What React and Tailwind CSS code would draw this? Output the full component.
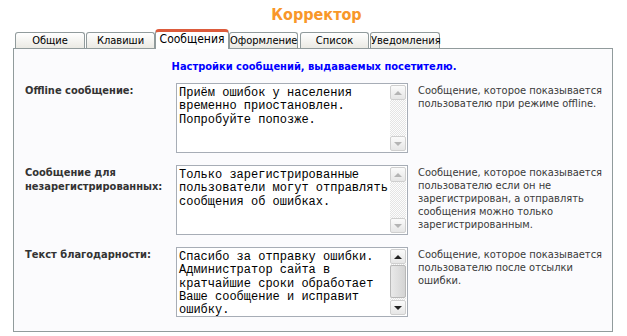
import React from 'react';

const tahoma = "font-['DejaVu_Sans_Condensed','Liberation_Sans',sans-serif]";

const tabs = [
  { label: 'Общие', w: 'w-[70px]', ml: 'ml-[15px]' },
  { label: 'Клавиши', w: 'w-[69px]', ml: 'ml-[1px]' },
  { label: 'Сообщения', w: 'w-[74px]', ml: 'ml-0', active: true },
  { label: 'Оформление', w: 'w-[69px]', ml: 'ml-0' },
  { label: 'Список', w: 'w-[69px]', ml: 'ml-[2px]' },
  { label: 'Уведомления', w: 'w-[70px]', ml: 'ml-[1px]' },
];

const rows = [
  {
    label: ['Offline сообщение:'],
    text: ['Приём ошибок у населения', 'временно приостановлен.', 'Попробуйте попозже.'],
    desc: ['Сообщение, которое показывается', 'пользователю при режиме offline.'],
  },
  {
    label: ['Сообщение для', 'незарегистрированных:'],
    text: ['Только зарегистрированные', 'пользователи могут отправлять', 'сообщения об ошибках.'],
    desc: [
      'Сообщение, которое показывается',
      'пользователю если он не',
      'зарегистрирован, а отправлять',
      'сообщения можно только',
      'зарегистрированным.',
    ],
  },
  {
    label: ['Текст благодарности:'],
    text: [
      'Спасибо за отправку ошибки.',
      'Администратор сайта в',
      'кратчайшие сроки обработает',
      'Ваше сообщение и исправит',
      'ошибку.',
    ],
    desc: ['Сообщение, которое показывается', 'пользователю после отсылки', 'ошибки.'],
    scroll: true,
  },
];

function Arrow({ up, active }) {
  const color = active ? 'border-b-[#222] border-t-[#222]' : 'border-b-[#b4b4b4] border-t-[#b4b4b4]';
  return (
    <div
      className={`w-0 h-0 border-x-[4px] border-x-transparent ${color} ${up ? 'border-b-[4px] border-t-0' : 'border-t-[4px] border-b-0'}`}
    />
  );
}

function ScrollButton({ up, active }) {
  return (
    <div className="h-[15px] flex items-center justify-center border border-[#cfcfcf] rounded-[2px] bg-gradient-to-b from-[#fbfbfb] to-[#e6e6e6]">
      <Arrow up={up} active={active} />
    </div>
  );
}

function Scrollbar({ active }) {
  return (
    <div className="w-[16px] flex flex-col py-[1px] mr-[1px]">
      <ScrollButton up active={active} />
      <div className="flex-1 flex flex-col bg-[repeating-conic-gradient(#e4e4e4_0_25%,#fdfdfd_0_50%)] bg-size-[2px_2px]">
        {active && (
          <div className="h-[33px] mt-[1px] border border-[#b8b8b8] rounded-[2px] bg-gradient-to-r from-[#e9e9e9] to-[#d4d4d4]" />
        )}
      </div>
      <ScrollButton active={active} />
    </div>
  );
}

export default function App() {
  return (
    <div className={`w-[627px] h-[336px] bg-white overflow-hidden ${tahoma}`}>
      <div className="h-[29px] pt-[5px] text-center text-[16px] leading-[19px] font-bold text-[#f8972a] pl-[6px]">
        Корректор
      </div>
      <div className="flex items-end h-[19px]">
        {tabs.map((t) =>
          t.active ? (
            <div
              key={t.label}
              className={`${t.w} ${t.ml} h-[20px] -mb-[1px] relative z-10 bg-white border-x border-[#919b9c] border-t-[3px] border-t-[#dc5b3c] rounded-t-[4px] text-center text-[12px] leading-[15px] text-black`}
            >
              {t.label}
            </div>
          ) : (
            <div
              key={t.label}
              className={`${t.w} ${t.ml} h-[16px] border border-b-0 border-[#919b9c] rounded-t-[3px] bg-gradient-to-b from-white to-[#ebeae4] text-center text-[11px] leading-[15px] text-black`}
            >
              {t.label}
            </div>
          )
        )}
      </div>
      <div className="ml-[13px] w-[600px] h-[284px] border border-[#919b9c] bg-[#fbfbfd] pt-[11px] px-[11px]">
        <div className="text-center text-[11px] leading-[13px] font-bold text-[#0000ff] mb-[10px] pl-[2px]">
          Настройки сообщений, выдаваемых посетителю.
        </div>
        <div className="flex flex-col gap-[12px]">
          {rows.map((r, i) => (
            <div key={i} className="grid grid-cols-[141px_232px_1fr] gap-x-[10px]">
              <div className="pt-[1px] text-[11px] leading-[14px] font-bold text-[#333] whitespace-nowrap">
                {r.label.map((l) => (
                  <div key={l}>{l}</div>
                ))}
              </div>
              <div className="h-[70px] flex border border-[#a7adb6] bg-white overflow-hidden">
                <div className="flex-1 pt-[3px] pl-[2px] font-['Liberation_Mono',monospace] text-[12px] leading-[13.3px] text-black whitespace-pre">
                  {r.text.map((l) => (
                    <div key={l}>{l}</div>
                  ))}
                </div>
                <Scrollbar active={r.scroll} />
              </div>
              <div className="pt-[1px] text-[11px] leading-[13px] text-[#3a3a3a] whitespace-nowrap">
                {r.desc.map((l) => (
                  <div key={l}>{l}</div>
                ))}
              </div>
            </div>
          ))}
        </div>
      </div>
    </div>
  );
}
